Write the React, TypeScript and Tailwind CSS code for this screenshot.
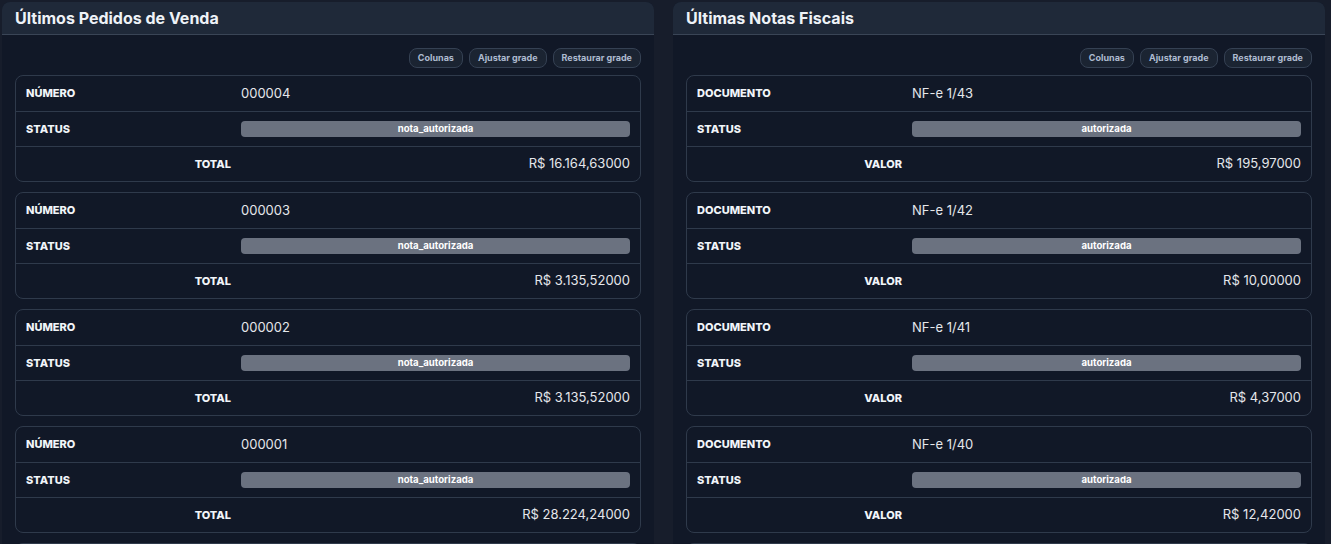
import React from "react";

type Field = { label: string; value: string; kind: "text" | "badge" | "money" };

const pedidos: Field[][] = [
  ["000004", "R$ 16.164,63000"],
  ["000003", "R$ 3.135,52000"],
  ["000002", "R$ 3.135,52000"],
  ["000001", "R$ 28.224,24000"],
].map(([n, t]) => [
  { label: "Número", value: n, kind: "text" },
  { label: "Status", value: "nota_autorizada", kind: "badge" },
  { label: "Total", value: t, kind: "money" },
]);

const notas: Field[][] = [
  ["NF-e 1/43", "R$ 195,97000"],
  ["NF-e 1/42", "R$ 10,00000"],
  ["NF-e 1/41", "R$ 4,37000"],
  ["NF-e 1/40", "R$ 12,42000"],
].map(([d, v]) => [
  { label: "Documento", value: d, kind: "text" },
  { label: "Status", value: "autorizada", kind: "badge" },
  { label: "Valor", value: v, kind: "money" },
]);

const rowHeights = ["h-[36px]", "h-[35px]", "h-[34px]"];

function Card({ fields }: { fields: Field[] }) {
  return (
    <div className="shrink-0 rounded-[8px] border border-[#2f3a4b]">
      {fields.map((f, i) => (
        <div
          key={f.label}
          className={`grid grid-cols-[205px_1fr] gap-[10px] px-[10px] items-center ${rowHeights[i]} ${
            i < fields.length - 1 ? "border-b border-[#2f3a4b]" : ""
          }`}
        >
          <div
            className={`text-[11px] font-extrabold uppercase text-[#f1f5f9] ${
              f.kind === "money" ? "text-right" : ""
            }`}
          >
            {f.label}
          </div>
          {f.kind === "badge" ? (
            <div className="h-[16px] rounded-[4px] bg-[#6b7280] flex items-center justify-center text-[9.6px] font-bold text-white">
              {f.value}
            </div>
          ) : (
            <div className={`text-[13px] text-[#e5e7eb] ${f.kind === "money" ? "text-right" : ""}`}>
              {f.value}
            </div>
          )}
        </div>
      ))}
    </div>
  );
}

function Panel({ title, rows, width }: { title: string; rows: Field[][]; width: string }) {
  return (
    <section className={`${width} shrink-0 rounded-t-[8px] bg-[#111827] overflow-hidden`}>
      <header className="h-[33px] bg-[#1f2939] border-b border-[#3a4556] px-[13px] flex items-center">
        <h2 className="text-[16px] font-bold text-[#eef2f7]">{title}</h2>
      </header>
      <div className="px-[13px] pt-[13px]">
        <div className="flex justify-end gap-[6px] mb-[7px]">
          {["Colunas", "Ajustar grade", "Restaurar grade"].map((b) => (
            <button
              key={b}
              className="h-[20px] px-[8px] rounded-[8px] border border-[#354153] bg-[#1b2432] text-[9px] font-bold text-[#aebbd0]"
            >
              {b}
            </button>
          ))}
        </div>
        <div className="flex flex-col gap-[10px]">
          {rows.map((r, i) => (
            <Card key={i} fields={r} />
          ))}
          {/* próximo card, cortado na borda inferior */}
          <div className="h-[20px] shrink-0 rounded-t-[8px] border border-b-0 border-[#2f3a4b]" />
        </div>
      </div>
    </section>
  );
}

export default function App() {
  return (
    <div
      className="h-[544px] w-[1331px] overflow-hidden bg-[#171d2b] pt-[2px] pl-[2px] flex items-start gap-[19px]"
      style={{ fontFamily: "Inter, 'Liberation Sans', sans-serif" }}
    >
      <Panel title="Últimos Pedidos de Venda" rows={pedidos} width="w-[652px]" />
      <Panel title="Últimas Notas Fiscais" rows={notas} width="w-[652px]" />
    </div>
  );
}
